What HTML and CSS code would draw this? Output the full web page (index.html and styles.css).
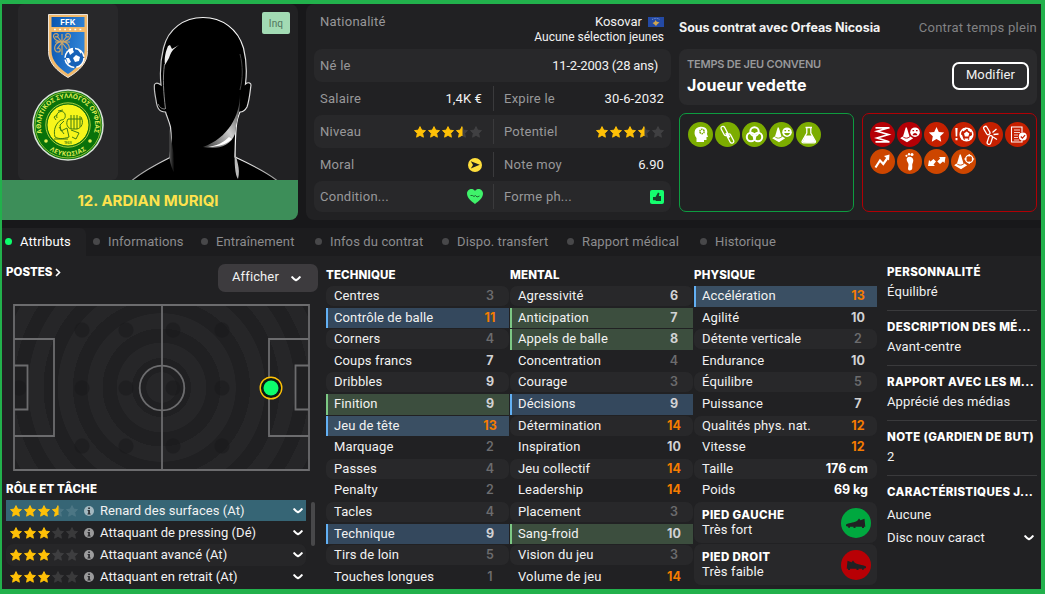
FILE: index.html
```html
<!DOCTYPE html>
<html lang="fr">
<head>
    <meta charset="UTF-8">
    <meta name="viewport" content="width=device-width, initial-scale=1.0">
    <title>Ardian Muriqi - Attributs</title>
    <link rel="stylesheet" href="styles.css">
</head>
<body>
    <!-- Shared icons -->
    <svg class="sprite" width="0" height="0">
        <symbol id="star" viewBox="0 0 12 12"><path d="M6 .6l1.700 3.500 3.800.5-2.800 2.700.7 3.900L6 9.300l-3.400 1.900.7-3.900L.5 4.600l3.800-.5z" stroke-width=".9" stroke-linejoin="round"/></symbol>
        <clipPath id="half"><rect x="42" y="0" width="6.500" height="12"/></clipPath>
        <symbol id="stars3" viewBox="0 0 68 12">
            <g fill="#ffc107" stroke="#ffc107"><use href="#star" width="12" height="12"/><use href="#star" x="14" width="12" height="12"/><use href="#star" x="28" width="12" height="12"/></g>
            <g fill="#fff" stroke="#fff" opacity=".11"><use href="#star" x="42" width="12" height="12"/><use href="#star" x="56" width="12" height="12"/></g>
        </symbol>
        <symbol id="stars35" viewBox="0 0 68 12">
            <use href="#stars3" width="68" height="12"/>
            <g clip-path="url(#half)"><use href="#star" x="42" width="12" height="12" fill="#ffc107" stroke="#ffc107"/></g>
        </symbol>
        <symbol id="chevron" viewBox="0 0 10 6"><path d="M1.200 1.200Q3 3.400 5 4.200 7 3.400 8.800 1.200" fill="none" stroke="#fff" stroke-width="2.100" stroke-linecap="round" stroke-linejoin="round"/></symbol>
        <symbol id="info" viewBox="0 0 10 10"><circle cx="5" cy="5" r="5" fill="#fff" opacity=".55"/><path d="M4.200 1.500h1.700v1.600H4.200zM3.600 4h2.300v3.400h.7v1H3.500v-1h.7V5h-.6z" fill="#2a2a2d"/></symbol>
        <symbol id="cone" viewBox="0 0 25 25"><path d="M8.700 5.500h1.100l2.700 9c-1.200 1.500-5.300 1.500-6.500 0z" fill="#fff"/><path d="M5.500 14.500c1.500 2.600 6 2.800 7.700 0l3 1.700-6.200 4.100L3.200 16.300z" fill="#fff"/></symbol>
        <symbol id="boot" viewBox="0 0 20 11"><path d="M0 6.500C4 4.500 9 4.800 11.500 2.500l1.500-2 1.500 1.700L18.500.7l.8 8.100H18v1.300h-2V8.800H9.500v1.300h-2V8.800H4v1H2.200v-1L0 8z" fill="#212123"/></symbol>
    </svg>

    <div class="screen">
        <header class="top">
            <section class="photo-card">
                <div class="photo">
                    <div class="badges">
                        <svg width="40" height="64" viewBox="0 0 40 64">
                            <defs><linearGradient id="blue" x1="0" x2="1" y1="0" y2=".3"><stop offset="0" stop-color="#0a55b0"/><stop offset="1" stop-color="#2f83d6"/></linearGradient></defs>
                            <path d="M.5.5h39v37C39.500 49 31 57 20 63.500 9 57 .5 49 .5 37.500z" fill="#f2b96a" stroke="#e8e2da"/>
                            <path d="M3.500 3h33v10h-33zM3.500 18h33v19c0 10-7.500 17-16.500 23C11 54 3.500 47 3.500 37z" fill="url(#blue)"/>
                            <text x="20" y="11" class="ffk" text-anchor="middle">FFK</text>
                            <path d="M6 15.500h28" stroke="#fff" stroke-width="1.500" stroke-dasharray="1.800 3.300"/>
                            <g fill="none" stroke="#c9a56b" stroke-width="1.200"><path d="M14 28C4 26 4 20 8 19.500c4 0 2 5-1 3M14 28c10-2 10-8 6-8.500-4 0-2 5 1 3M14 28c-9 0-9 10-4 10 3 0 3-4 0-4M14 28c9 0 9 10 4 10M7 28h15M14 20v21M9 22l10 13M19 22L9 35"/></g>
                            <circle cx="26.500" cy="44" r="9.500" fill="#1762b8" stroke="#fff" stroke-width="1.600" stroke-dasharray="13 2"/>
                            <path d="M28 41l4 2-1 4-4 1-2-4zM20 36l4-2 2 4-4 3zM18 44l3 0 2 4-3 2zM30 36l3 1v3z" fill="#fff"/>
                        </svg>
                        <svg width="72" height="72" viewBox="0 0 72 72">
                            <defs><path id="arcTop" d="M10.500 45A27 27 0 1 1 61.500 45"/><path id="arcBottom" d="M10.700 54A31 31 0 0 0 61.300 54"/></defs>
                            <circle cx="36" cy="36" r="35" fill="#08720a" stroke="#d8e0d6" stroke-width="1.600"/>
                            <circle cx="36" cy="36" r="33" fill="none" stroke="#c8dc4a" stroke-width=".7"/>
                            <circle cx="36" cy="36" r="21" fill="#f7f51b" stroke="#0b6b10" stroke-width="1"/>
                            <circle cx="36" cy="36" r="22.200" fill="none" stroke="#d6e64c" stroke-width=".8"/>
                            <text class="crest-text"><textPath href="#arcTop" startOffset="1" textLength="100">ΑΘΛΗΤΙΚΟΣ ΣΥΛΛΟΓΟΣ ΟΡΦΕΑΣ</textPath></text>
                            <text class="crest-text"><textPath href="#arcBottom" startOffset="10" textLength="39">ΛΕΥΚΩΣΙΑΣ</textPath></text>
                            <circle cx="14" cy="52" r="1.800" fill="#e5ee55"/><circle cx="58" cy="52" r="1.800" fill="#e5ee55"/>
                            <g fill="none" stroke="#3f7d12" stroke-width="1"><path d="M25 29c-2-6 6-9 8-4 1 4-1 6-4 6-5 3-8 10-6 17 5 3 11 1 14 0l-2-9-6 3-1-6 4-4M25 26l-3 2 2 3M36 30c-3 5 0 10 4 10h5c5-1 7-7 4-12M36 30h14M39 26v14M42 26v14M45 26v14M48 27v11M39 41l8 3-3 6-4-2M22 50h14"/><path d="M26 22l5-1M27 38l5 7"/></g>
                            <text x="36" y="54.500" class="crest-year" text-anchor="middle">1948</text>
                        </svg>
                    </div>
                    <svg class="silhouette" width="180" height="176" viewBox="118 4 180 176">
                        <defs>
                            <linearGradient id="rim" x1="0" x2="1" y1="0" y2="0"><stop offset="0" stop-color="#999"/><stop offset=".35" stop-color="#eee"/><stop offset=".7" stop-color="#fff"/><stop offset="1" stop-color="#999"/></linearGradient>
                            <linearGradient id="jaw" x1="0" x2="1" y1="1" y2="0"><stop offset="0" stop-color="#333"/><stop offset=".5" stop-color="#ccc"/><stop offset="1" stop-color="#222"/></linearGradient>
                            <linearGradient id="neck" x1="0" x2="1"><stop offset="0" stop-color="#555"/><stop offset="1" stop-color="#000"/></linearGradient>
                        </defs>
                        <path d="M132 180.500C142 172 155 165 170 157.500 171.500 145 171.500 135 170.500 127 169 121 167 117 165.500 112 159 112 157 108 156 100 155 95 154 88 154.500 84.500 156 82.500 159 83.500 161 85 160 75 160.500 60 163.500 48 168 29 184 17.500 203 17.500 222 17.500 238 29 243.500 48 246.500 60 247 72 245.500 84 248 82 251 82.500 251 85 250 92 249.500 100 247 107 245 110.500 243 112 240 112 236 120 235.500 130 235 157 250 164 265 171 277 180.500z" fill="#000" stroke="url(#rim)" stroke-width="1.200"/>
                        <path d="M240 94C240 116 228 138 203 147 216 150 230 147 235 134 236 120 241 112 240 94z" fill="url(#jaw)"/>
                        <path d="M229 137c-6 6-13 9-21 10 9 0 18-2 24-8z" fill="#fff"/>
                        <path d="M168 46l2-1 2 4 7-4c-6 4-8 7-10 13l-4 7c-1-8 1-14 3-19z" fill="#eee"/>
                        <path d="M169.500 128v30c1 7 3 12 5 15l-1-20z" fill="url(#neck)"/>
                        <path d="M235 150c1 10 6 18 3 29-3-3-4-18-3-29z" fill="#bbb"/>
                        <path d="M164.500 64c-2 15-1 28 1 45M158 104c2 4 4 5 7 5" fill="none" stroke="#888" stroke-width="1"/>
                        <path d="M240 54c3 12 3 24 0 36" fill="none" stroke="#444" stroke-width="1"/>
                    </svg>
                    <span class="inq">Inq</span>
                </div>
                <div class="player-name">12. ARDIAN MURIQI</div>
            </section>

            <section class="overview">
                <div class="info">
                    <div class="info-row nation">
                        <span class="label">Nationalité</span>
                        <div class="nation-value">
                            <div class="country">Kosovar
                                <svg width="16" height="10" viewBox="0 0 16 10"><path fill="#244aa5" d="M0 0h16v10H0z"/><path d="M7.500 3l1 1.500 3 1-2 1.500L8 9 6.500 7.500 4.500 6l2-1z" fill="#d0a650"/><path d="M4 2.500c3-1.500 5-1.500 8 0" fill="none" stroke="#8fa6dc" stroke-width=".8" stroke-dasharray="1 .7"/></svg>
                            </div>
                            <div class="youth">Aucune sélection jeunes</div>
                        </div>
                    </div>
                    <div class="info-row shaded born"><span class="label">Né le</span><span class="birth">11-2-2003 (28 ans)</span></div>
                    <div class="info-row split">
                        <div class="cell"><span class="label">Salaire</span><span>1,4K €</span></div>
                        <div class="cell"><span class="label">Expire le</span><span>30-6-2032</span></div>
                    </div>
                    <div class="info-row split shaded">
                        <div class="cell"><span class="label">Niveau</span><svg width="68" height="12"><use href="#stars35"/></svg></div>
                        <div class="cell"><span class="label">Potentiel</span><svg width="68" height="12"><use href="#stars35"/></svg></div>
                    </div>
                    <div class="info-row split">
                        <div class="cell"><span class="label">Moral</span>
                            <svg width="14" height="14" viewBox="0 0 14 14"><circle cx="7" cy="7" r="7" fill="#ffdf3c"/><path d="M2.800 3.300L11.800 6.800 2.800 10.600 5 7z" fill="#212123"/></svg></div>
                        <div class="cell"><span class="label">Note moy</span><span>6.90</span></div>
                    </div>
                    <div class="info-row split shaded last">
                        <div class="cell heart"><span class="label">Condition...</span>
                            <svg width="16" height="15" viewBox="0 0 16 15"><path d="M8 15C4 12 0 9 0 4.500 0 1 5-2 8 2c3-4 8-1 8 2.500C16 9 12 12 8 15z" fill="#3ff26a"/><path d="M3.500 6.500h2l1.500 1 1.500-1 1.500 1.500 2.500-1" fill="none" stroke="#185a2a" stroke-width=".9"/></svg></div>
                        <div class="cell"><span class="label">Forme ph...</span>
                            <svg width="14" height="14" viewBox="0 0 14 14"><rect width="14" height="14" rx="2" fill="#14ff6e"/><path d="M3 7h2.500L8 2.500l1.500.8L8.800 6H11v5H6l-.5-.8H3z" fill="#17402a"/></svg></div>
                    </div>
                </div>

                <div class="contract">
                    <div class="contract-head"><b>Sous contrat avec Orfeas Nicosia</b><span class="full-time">Contrat temps plein</span></div>
                    <div class="playing-time">
                        <div>
                            <div class="playing-label">TEMPS DE JEU CONVENU</div>
                            <div class="playing-value">Joueur vedette</div>
                        </div>
                        <button class="edit">Modifier</button>
                    </div>
                    <div class="traits">
                        <div class="trait-box pros">
                            <svg class="trait" viewBox="0 0 25 25"><path d="M8.500 20v-4c-3-3-3-11 4-11.200C19 4.500 20 9 19 12l1 3h-1.500v3H16v2z" fill="#fff"/><circle cx="14" cy="9.500" r="2.200" fill="none" stroke="#7cad00" stroke-width="1.500" stroke-dasharray="1.500 .6"/></svg>
                            <svg class="trait" viewBox="0 0 25 25"><g fill="none" stroke="#fff" stroke-width="1.200"><rect x="7.500" y="4" width="3.800" height="10" rx="1.900" transform="rotate(-28 9.400 9)"/><rect x="13.500" y="11.500" width="3.800" height="10" rx="1.900" transform="rotate(-28 15.400 16.500)"/></g><path d="M11 11l3.500 4.500" stroke="#fff" stroke-width="2.400"/></svg>
                            <svg class="trait" viewBox="0 0 25 25"><g fill="none" stroke="#fff" stroke-width="2"><circle cx="12.500" cy="9.500" r="4.200"/><circle cx="9" cy="15" r="4.200"/><circle cx="16" cy="15" r="4.200"/></g></svg>
                            <svg class="trait" viewBox="0 0 25 25"><use href="#cone"/><circle cx="18" cy="10.200" r="4.800" fill="#fff"/><path d="M15.200 11h5.800c-.8 3.300-5 3.300-5.800 0zM15.500 8h1.600v1.300h-1.600zM19 8h1.600v1.300H19z" fill="#7cad00"/></svg>
                            <svg class="trait" viewBox="0 0 25 25"><path d="M9.500 5.500h6.500M10.800 6v5L6 19.500c0 1 .5 1.300 1.300 1.300h11c.8 0 1.200-.3 1.200-1.300L14.800 11V6" fill="none" stroke="#fff" stroke-width="1.300"/><path d="M9.500 13.500h6.700l3 6.500c-3 1-10 1-12.700 0z" fill="#fff"/></svg>
                        </div>
                        <div class="trait-box cons">
                            <svg class="trait red" viewBox="0 0 25 25"><path d="M5.500 5.800h14M18 6L7 9.300l11.500 3.200L7 16l11.500 3.500M5.500 19.800h14" fill="none" stroke="#fff" stroke-width="1.700"/></svg>
                            <svg class="trait red" viewBox="0 0 25 25"><use href="#cone"/><circle cx="18" cy="10.200" r="4.800" fill="#fff"/><path d="M15.500 13.200c.8-3 4.200-3 5 0zM15.500 8h1.600v1.300h-1.600zM19 8h1.600v1.300H19z" fill="#b50006"/></svg>
                            <svg class="trait brick" viewBox="0 0 25 25"><path d="M12.500 5l2.300 5 5.400.6-4 3.700 1 5.400-4.700-2.700-4.700 2.700 1-5.400-4-3.700 5.400-.6z" fill="#fff"/></svg>
                            <svg class="trait brick" viewBox="0 0 25 25"><path d="M4.300 6h2.300l-.4 8.500H4.700zM4.500 16h2v2.200h-2z" fill="#fff"/><circle cx="15.500" cy="12.500" r="6.300" fill="none" stroke="#fff" stroke-width="1.500"/><path d="M13 11.500l2.700-2 2.600 2-1 3h-3.400zM11 7l4-1.500v2l-3 2zM17 6l4 2-1 2.500-3-2zM9 12l2 1 1.500 4-2 .5zM21.500 13l-1 4-2.500.5.500-3zM13.500 16.500h4l-1 2h-2z" fill="#fff"/></svg>
                            <svg class="trait brick" viewBox="0 0 25 25"><g fill="none" stroke="#fff" stroke-width="1.300"><rect x="7" y="4" width="3.600" height="9" rx="1.800" transform="rotate(-30 8.800 8.500)"/><rect x="10" y="13.500" width="3.600" height="9" rx="1.800" transform="rotate(18 11.800 18)"/><path d="M14.500 10.500l4-3.500M15.500 12.500l5-.5M15 15l4 2.500"/></g></svg>
                            <svg class="trait brick" viewBox="0 0 25 25"><path d="M17 10.500V5H6.500v15H17v-2" fill="none" stroke="#fff" stroke-width="1.100"/><path d="M9 8h6M9 10.500h6M9 13h4M9 15.500h4M9 18h5" stroke="#fff" stroke-width=".8"/><circle cx="17.800" cy="14.500" r="4" fill="#fff"/><path d="M15.800 14.500l1.600 1.700 2.700-3" fill="none" stroke="#c62000" stroke-width="1.200"/></svg>
                            <svg class="trait orange" viewBox="0 0 25 25"><path d="M5.500 18.500l4.500-7 3.300 3.500 4.200-6" fill="none" stroke="#fff" stroke-width="2.200"/><path d="M14 7l5.500-1.500-.5 6z" fill="#fff"/></svg>
                            <svg class="trait orange" viewBox="0 0 25 25"><path d="M10 9c2-2.500 6.500-1 6.300 2.500-.2 2.500-1.500 3.500-1 6 .3 3-1 4-2.800 4-2.300-.5-1.200-3-1-5.500.3-2.500-2.800-4-1.500-7z" fill="#fff"/><circle cx="9.500" cy="6.800" r="1.100" fill="#fff"/><circle cx="12" cy="5.300" r="1.200" fill="#fff"/><circle cx="15" cy="5.500" r="1.500" fill="#fff"/></svg>
                            <svg class="trait orange" viewBox="0 0 25 25"><path d="M4 17l1-6 1.500 1.500 3-2.500 2.500 2.500-2.500 3 1.500 1.500zM21.500 8l-1 6-1.500-1.500-3 2.500-2.800-2.500 3-3L15 8z" fill="#fff"/></svg>
                            <svg class="trait orange" viewBox="0 0 25 25"><use href="#cone"/><g fill="none" stroke="#fff"><circle cx="18.200" cy="10" r="3.600" stroke-width="1.300"/><path d="M18.200 5v2.500M18.200 12.500V15M13.200 10h2.500M20.700 10h2.500" stroke-width="1.200"/></g></svg>
                        </div>
                    </div>
                </div>
            </section>
        </header>

        <nav class="tabs">
            <a class="tab active">Attributs</a>
            <a class="tab">Informations</a>
            <a class="tab">Entraînement</a>
            <a class="tab">Infos du contrat</a>
            <a class="tab">Dispo. transfert</a>
            <a class="tab">Rapport médical</a>
            <a class="tab">Historique</a>
        </nav>

        <main class="content">
            <section class="positions">
                <div class="positions-head">
                    <h2>POSTES <svg width="6" height="9" viewBox="0 0 6 9"><path d="M1 1l3.500 3.500L1 8" fill="none" stroke="#fff" stroke-width="1.600"/></svg></h2>
                    <button class="show">Afficher <svg width="10" height="6"><use href="#chevron"/></svg></button>
                </div>
                <div class="pitch">
                    <svg width="297" height="167" viewBox="0 0 297 167">
                        <g fill="#1a1a1c" opacity=".5"><circle cx="69" cy="26" r="7.500"/><circle cx="113" cy="26" r="7.500"/><circle cx="160" cy="26" r="7.500"/><circle cx="209" cy="26" r="7.500"/><circle cx="6" cy="84" r="7.500"/><circle cx="69" cy="84" r="7.500"/><circle cx="113" cy="84" r="7.500"/><circle cx="160" cy="84" r="7.500"/><circle cx="209" cy="84" r="7.500"/><circle cx="69" cy="142" r="7.500"/><circle cx="113" cy="142" r="7.500"/><circle cx="160" cy="142" r="7.500"/><circle cx="209" cy="142" r="7.500"/></g>
                        <g fill="none" stroke="#6c6c6e" stroke-width="1.800"><path d="M1 1h295v165H1zM149 1v165M1 35h40v97H1M1 61.500h13.500v44H1M296 35h-40v97h40M296 61.500h-13.500v44H296"/><circle cx="149" cy="84" r="22.300"/></g>
                        <circle cx="258" cy="84" r="10.800" fill="#0c1a12" stroke="#ffc107" stroke-width="1.400"/><circle cx="258" cy="84" r="7.500" fill="#0cff6c"/>
                    </svg>
                </div>
                <h2 class="role-title">RÔLE ET TÂCHE</h2>
                <div class="roles-wrap">
                    <div class="roles">
                        <div class="role selected"><svg width="68" height="12"><use href="#stars35"/></svg><svg class="i" width="10" height="10"><use href="#info"/></svg><span>Renard des surfaces (At)</span><svg class="more" width="10" height="6"><use href="#chevron"/></svg></div>
                        <div class="role"><svg width="68" height="12"><use href="#stars3"/></svg><svg class="i" width="10" height="10"><use href="#info"/></svg><span>Attaquant de pressing (Dé)</span><svg class="more" width="10" height="6"><use href="#chevron"/></svg></div>
                        <div class="role alt"><svg width="68" height="12"><use href="#stars3"/></svg><svg class="i" width="10" height="10"><use href="#info"/></svg><span>Attaquant avancé (At)</span><svg class="more" width="10" height="6"><use href="#chevron"/></svg></div>
                        <div class="role"><svg width="68" height="12"><use href="#stars3"/></svg><svg class="i" width="10" height="10"><use href="#info"/></svg><span>Attaquant en retrait (At)</span><svg class="more" width="10" height="6"><use href="#chevron"/></svg></div>
                    </div>
                    <div class="scrollbar"></div>
                </div>
            </section>

            <section class="attributes">
                <div class="column">
                    <h2>TECHNIQUE</h2>
                    <div class="attr"><span>Centres</span><b class="low">3</b></div>
                    <div class="attr key"><span>Contrôle de balle</span><b class="high">11</b></div>
                    <div class="attr"><span>Corners</span><b class="low">4</b></div>
                    <div class="attr"><span>Coups francs</span><b>7</b></div>
                    <div class="attr"><span>Dribbles</span><b>9</b></div>
                    <div class="attr useful"><span>Finition</span><b>9</b></div>
                    <div class="attr key"><span>Jeu de tête</span><b class="high">13</b></div>
                    <div class="attr"><span>Marquage</span><b class="low">2</b></div>
                    <div class="attr"><span>Passes</span><b class="low">4</b></div>
                    <div class="attr"><span>Penalty</span><b class="low">2</b></div>
                    <div class="attr"><span>Tacles</span><b class="low">4</b></div>
                    <div class="attr key"><span>Technique</span><b>9</b></div>
                    <div class="attr"><span>Tirs de loin</span><b class="low">5</b></div>
                    <div class="attr"><span>Touches longues</span><b class="low">1</b></div>
                </div>
                <div class="column">
                    <h2>MENTAL</h2>
                    <div class="attr"><span>Agressivité</span><b>6</b></div>
                    <div class="attr useful"><span>Anticipation</span><b>7</b></div>
                    <div class="attr useful"><span>Appels de balle</span><b>8</b></div>
                    <div class="attr"><span>Concentration</span><b class="low">4</b></div>
                    <div class="attr"><span>Courage</span><b class="low">3</b></div>
                    <div class="attr key"><span>Décisions</span><b>9</b></div>
                    <div class="attr"><span>Détermination</span><b class="high">14</b></div>
                    <div class="attr"><span>Inspiration</span><b>10</b></div>
                    <div class="attr"><span>Jeu collectif</span><b class="high">14</b></div>
                    <div class="attr"><span>Leadership</span><b class="high">14</b></div>
                    <div class="attr"><span>Placement</span><b class="low">3</b></div>
                    <div class="attr useful"><span>Sang-froid</span><b>10</b></div>
                    <div class="attr"><span>Vision du jeu</span><b class="low">3</b></div>
                    <div class="attr"><span>Volume de jeu</span><b class="high">14</b></div>
                </div>
                <div class="column">
                    <h2>PHYSIQUE</h2>
                    <div class="attr key"><span>Accélération</span><b class="high">13</b></div>
                    <div class="attr"><span>Agilité</span><b>10</b></div>
                    <div class="attr"><span>Détente verticale</span><b class="low">2</b></div>
                    <div class="attr"><span>Endurance</span><b>10</b></div>
                    <div class="attr"><span>Équilibre</span><b class="low">5</b></div>
                    <div class="attr"><span>Puissance</span><b>7</b></div>
                    <div class="attr"><span>Qualités phys. nat.</span><b class="high">12</b></div>
                    <div class="attr"><span>Vitesse</span><b class="high">12</b></div>
                    <div class="attr"><span>Taille</span><b class="measure">176 cm</b></div>
                    <div class="attr"><span>Poids</span><b class="measure">69 kg</b></div>
                    <div class="foot">
                        <div><h2>PIED GAUCHE</h2><span>Très fort</span></div>
                        <span class="foot-icon strong"><svg width="20" height="11"><use href="#boot"/></svg></span>
                    </div>
                    <div class="foot">
                        <div><h2>PIED DROIT</h2><span>Très faible</span></div>
                        <span class="foot-icon weak"><svg width="20" height="11"><use href="#boot"/></svg></span>
                    </div>
                </div>
            </section>

            <aside class="profile">
                <div class="fact"><h2>PERSONNALITÉ</h2><p>Équilibré</p></div>
                <div class="fact"><h2>DESCRIPTION DES MÉ...</h2><p>Avant-centre</p></div>
                <div class="fact"><h2>RAPPORT AVEC LES M...</h2><p>Apprécié des médias</p></div>
                <div class="fact"><h2>NOTE (GARDIEN DE BUT)</h2><p>2</p></div>
                <div class="fact moves">
                    <h2>CARACTÉRISTIQUES J...</h2>
                    <p>Aucune</p>
                    <p class="discuss">Disc nouv caract <svg width="10" height="6"><use href="#chevron"/></svg></p>
                </div>
            </aside>
        </main>
    </div>
</body>
</html>
```
FILE: styles.css
```css
* {
    box-sizing: border-box;
}
body {
    margin: 0;
    font-family: Roboto, sans-serif;
    font-size: 13px;
    letter-spacing: 0.12px;
    color: #f2f2f2;
    background: #22b14c;
}
svg {
    display: block;
    flex: none;
}
.sprite {
    position: absolute;
}
.screen {
    width: 1045px;
    height: 594px;
    border: solid #22b14c;
    border-width: 4px 4px 5px 2px;
    background: #18181a;
    overflow: hidden;
}
h2 {
    margin: 0;
    font-family: Inter, sans-serif;
    font-size: 11.5px;
    font-weight: 800;
    line-height: 14px;
    letter-spacing: 0.15px;
    color: #fff;
    white-space: nowrap;
}
button {
    font: inherit;
    letter-spacing: inherit;
    color: inherit;
}

/* Header */
.top {
    display: flex;
    gap: 8px;
    height: 216px;
}
.photo-card {
    width: 296px;
    border-radius: 0 8px 8px 0;
    overflow: hidden;
    background: #212123;
}
.photo {
    position: relative;
    display: flex;
    height: 176px;
    padding-left: 16px;
}
.badges {
    width: 100px;
    padding: 10px 0 0;
    display: flex;
    flex-direction: column;
    align-items: center;
    gap: 11px;
    background: #28282a;
    border-radius: 6px;
}
.ffk {
    font: 700 8px Inter, sans-serif;
    fill: #fff;
}
.crest-text {
    font: 700 6.5px "Open Sans", sans-serif;
    letter-spacing: 0;
    fill: #dfeb55;
}
.crest-year {
    font: 700 3px Inter, sans-serif;
    fill: #3f7d12;
}
.inq {
    position: absolute;
    top: 8px;
    right: 8px;
    width: 28px;
    height: 22px;
    line-height: 23px;
    text-align: center;
    font-size: 10px;
    color: #50735c;
    background: #a2dbb4;
    border-radius: 2px;
}
.player-name {
    height: 40px;
    padding-right: 4px;
    text-align: center;
    font: 700 15px/41px Inter, sans-serif;
    letter-spacing: 0;
    color: #ffe24d;
    background: #3d8e59;
}
.overview {
    flex: 1;
    display: flex;
    gap: 8px;
    padding: 0 4px 0 8px;
    background: #212123;
    border-radius: 8px 0 0 8px;
}
.info {
    width: 357px;
}
.info-row {
    display: flex;
    justify-content: space-between;
    align-items: center;
    height: 33px;
    padding: 0 7px 0 6px;
}
.label {
    color: #98989a;
    letter-spacing: 0.25px;
}
.shaded {
    background: #28282a;
    border-radius: 8px;
}
.nation {
    height: 45px;
    align-items: flex-start;
    padding-top: 9px;
    line-height: 17px;
}
.nation-value {
    text-align: right;
}
.country {
    display: flex;
    justify-content: flex-end;
    align-items: center;
    gap: 6px;
    letter-spacing: 0;
}
.youth {
    font-size: 12px;
    line-height: 15px;
    letter-spacing: 0;
}
.born {
    padding-right: 13px;
}
.birth {
    letter-spacing: -0.2px;
}
.split {
    padding: 4px 7px 4px 6px;
}
.cell {
    flex: 1;
    display: flex;
    align-items: center;
    justify-content: space-between;
    height: 25px;
}
.cell:first-child {
    flex: 0 0 174px;
    padding-right: 11px;
    border-right: 1px solid #3a3a3c;
}
.cell + .cell {
    padding-left: 10px;
}
.heart:first-child {
    padding-right: 10px;
}
.last {
    height: 31px;
    padding-top: 4px;
}

/* Contract */
.contract {
    width: 358px;
}
.contract-head {
    display: flex;
    justify-content: space-between;
    align-items: center;
    height: 45px;
    padding-top: 1px;
}
.contract-head b {
    font-family: Inter, sans-serif;
    font-size: 12.5px;
    letter-spacing: -0.05px;
}
.full-time {
    color: #828284;
    letter-spacing: 0.25px;
}
.playing-time {
    display: flex;
    justify-content: space-between;
    align-items: flex-start;
    height: 56px;
    padding: 8px 8px 0;
    background: #2a2a2c;
    border-radius: 8px;
}
.playing-label {
    font: 600 11px/14px Inter, sans-serif;
    letter-spacing: -0.22px;
    color: #98989a;
}
.playing-value {
    font: 700 16px/26px Inter, sans-serif;
    padding-top: 1px;
    color: #fff;
}
.edit {
    width: 77px;
    height: 28px;
    margin-top: 5px;
    padding: 0 0 3px;
    background: none;
    border: 2px solid #fff;
    border-radius: 7px;
}
.traits {
    display: flex;
    gap: 8px;
    margin-top: 8px;
}
.trait-box {
    width: 175px;
    height: 99px;
    display: flex;
    flex-wrap: wrap;
    align-content: flex-start;
    gap: 2px;
    padding: 8px 0 0 7px;
    border-radius: 7px;
}
.pros {
    padding-left: 7.5px;
    border: 1px solid #0d9c40;
}
.cons {
    border: 1px solid #b00005;
}
.trait {
    width: 25px;
    height: 25px;
    border-radius: 50%;
    background: #7cad00;
}
.red {
    background: #b50006;
}
.brick {
    background: #c62000;
}
.orange {
    background: #cd4600;
}

/* Tabs */
.tabs {
    display: grid;
    grid-template-columns: 84px 112px 114px 127px 125px 133px 110px;
    height: 28px;
    margin-top: 8px;
    background: #1c1c1e;
}
.tab {
    display: flex;
    align-items: center;
    gap: 8px;
    padding: 0 0 2px 3px;
    height: 28px;
    color: #8c8c8e;
    white-space: nowrap;
}
.tab::before {
    content: "";
    width: 7px;
    height: 7px;
    border-radius: 50%;
    background: #48484a;
}
.tab:nth-child(2) {
    padding-left: 7px;
}
.active {
    color: #fff;
    background: #212123;
    border-radius: 0 6px 0 0;
}
.active::before {
    background: #0cff6c;
}

/* Content */
.content {
    display: flex;
    height: 333px;
    background: #212123;
}
.positions {
    width: 324px;
    padding: 8px 0 0 4px;
}
.positions-head {
    display: flex;
    justify-content: space-between;
    height: 40px;
    padding-right: 8px;
}
.positions-head h2 {
    display: flex;
    align-items: center;
    gap: 3px;
    height: 16px;
    letter-spacing: 0;
}
.show {
    display: flex;
    align-items: center;
    gap: 12px;
    width: 100px;
    height: 28px;
    padding: 0 0 3px 14px;
    background: #3d3b3e;
    border: 0;
    border-radius: 7px;
}
.show svg {
    margin-top: 4px;
}
.pitch {
    width: 297px;
    height: 167px;
    margin-left: 7px;
    background: repeating-radial-gradient(circle at 50% 50%, #262628 0 15px, #202022 15.5px 29.500px);
}
.role-title {
    margin: 11px 0 4px;
}
.roles-wrap {
    display: flex;
    gap: 5px;
}
.roles {
    width: 300px;
}
.role {
    display: flex;
    align-items: center;
    height: 22px;
    padding: 0 3px 1px 4px;
    letter-spacing: 0.05px;
}
.role .i {
    margin: 0 6px;
}
.role .more {
    margin-left: auto;
}
.role.selected {
    background: #366575;
    height: 21px;
    margin-bottom: 1px;
    padding-bottom: 0;
}
.alt {
    background: #262628;
    border-radius: 7px;
}
.scrollbar {
    width: 4px;
    height: 44px;
    margin-top: 2px;
    background: #48484a;
    border-radius: 2px;
}

/* Attribute columns */
.attributes {
    display: grid;
    grid-template-columns: repeat(3, 183px);
    gap: 1px;
    padding-top: 12px;
}
.column h2 {
    margin-bottom: 4px;
}
.attr {
    display: flex;
    align-items: center;
    justify-content: space-between;
    height: 20.1px;
    margin-bottom: 1.5px;
    padding: 0 0 1px 8px;
    border-radius: 7px;
}
.attr:nth-child(even) {
    background: #28282a;
}
.attr b {
    width: 38px;
    text-align: center;
    font-family: Inter, sans-serif;
    font-size: 12.5px;
    font-weight: 700;
    letter-spacing: 0;
    color: #d2d2d4;
}
.attr b.low {
    font-weight: 600;
    color: #6c6c6e;
}
.attr b.high {
    color: #f57c00;
}
.attr b.measure {
    width: auto;
    padding-right: 9px;
    color: #fff;
}
.attr.key,
.attr.useful {
    height: 20.6px;
    margin-bottom: 1px;
    padding-left: 6px;
    border-left: 2px solid #62b0f4;
    border-radius: 0;
    background: #34485d;
}
.attr.useful {
    border-left-color: #7cc884;
    background: #3c4e3e;
}
.attr.key:nth-child(even) {
    background: #3a4f63;
}
.foot {
    display: flex;
    justify-content: space-between;
    align-items: center;
    height: 41px;
    margin-bottom: 1px;
    padding: 2px 6px 0 8px;
    background: #28282a;
    border-radius: 7px;
    line-height: 16px;
}
.foot h2 {
    margin: 0;
    letter-spacing: 0.4px;
}
.foot-icon {
    display: flex;
    align-items: center;
    justify-content: center;
    width: 30px;
    height: 30px;
    border-radius: 50%;
}
.strong {
    background: #00a83f;
}
.weak {
    background: #b80005;
}
.weak svg {
    transform: scaleX(-1);
}

/* Profile facts */
.profile {
    width: 150px;
    margin-left: 10px;
    padding-top: 9px;
}
.fact {
    height: 46px;
    margin-bottom: 9px;
    border-bottom: 1px solid #3a3a3c;
}
.fact h2 {
    letter-spacing: 0.35px;
}
.fact p {
    margin: 5px 0 0;
    line-height: 16px;
    white-space: nowrap;
}
.fact.moves {
    height: auto;
    border: 0;
}
.fact.moves p {
    margin-top: 7px;
}
.fact.moves h2 {
    margin-bottom: 8px;
}
.discuss {
    display: flex;
    align-items: center;
    justify-content: space-between;
    padding-right: 3px;
}
```
